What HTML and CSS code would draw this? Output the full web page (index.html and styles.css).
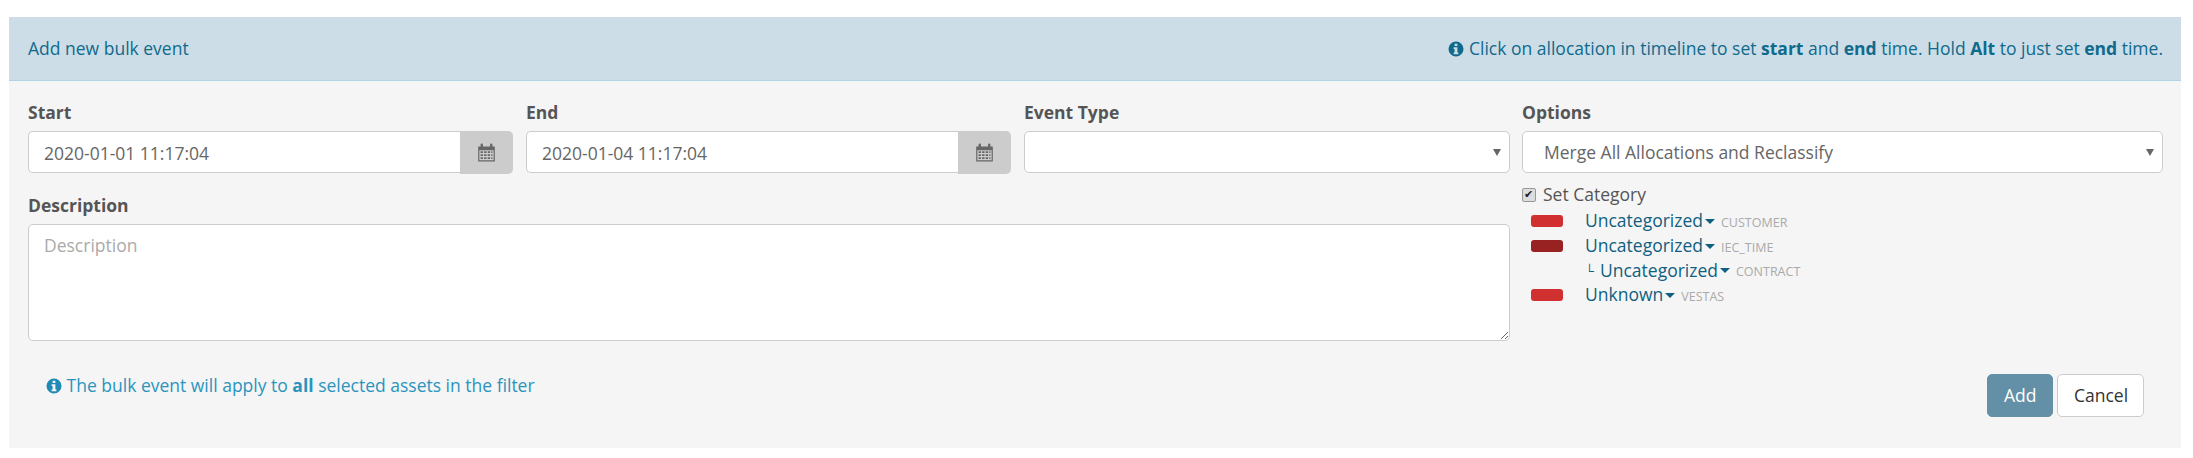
FILE: index.html
```html
<!DOCTYPE html>
<html lang="en">
<head>
<meta charset="utf-8">
<title>Add new bulk event</title>
<link rel="stylesheet" href="styles.css">
</head>
<body>
<section class="panel">
  <header class="panel-head">
    <span class="panel-title">Add new bulk event</span>
    <span class="panel-hint">
      <svg class="info" viewBox="0 0 16 16"><path fill-rule="evenodd" d="M8 .5a7.5 7.5 0 1 0 0 15 7.5 7.5 0 0 0 0-15zM6.6 2.7h2.8v2.2H6.6zM5.6 6.2h3.8v5.3h1v1.8H5.6v-1.8h1V8H5.6z"/></svg>
      Click on allocation in timeline to set <b>start</b> and <b>end</b> time. Hold <b>Alt</b> to just set <b>end</b> time.
    </span>
  </header>
  <form class="panel-body">
    <div class="fields">
      <div class="left">
        <div class="field">
          <label class="lbl">Start</label>
          <div class="group">
            <input class="ctl date" type="text" value="2020-01-01 11:17:04">
            <span class="addon"><svg class="cal" viewBox="0 0 16 16"><path d="M1 3h2V1.6C3 .8 3.5.5 4 .5s1 .3 1 1.1V3h6V1.6c0-.8.5-1.1 1-1.1s1 .3 1 1.1V3h2v12.5H1zM2 6v8.5h12V6zM3 7h2v1.5H3zm3 0h2v1.5H6zm3 0h2v1.5H9zm3 0h1v1.5h-1zM3 9.5h2V11H3zm3 0h2V11H6zm3 0h2V11H9zm3 0h1V11h-1zM3 12h2v1.5H3zm3 0h2v1.5H6zm3 0h2v1.5H9zm3 0h1v1.5h-1z"/></svg></span>
          </div>
        </div>
        <div class="field">
          <label class="lbl">End</label>
          <div class="group">
            <input class="ctl date" type="text" value="2020-01-04 11:17:04">
            <span class="addon"><svg class="cal" viewBox="0 0 16 16"><path d="M1 3h2V1.6C3 .8 3.5.5 4 .5s1 .3 1 1.1V3h6V1.6c0-.8.5-1.1 1-1.1s1 .3 1 1.1V3h2v12.5H1zM2 6v8.5h12V6zM3 7h2v1.5H3zm3 0h2v1.5H6zm3 0h2v1.5H9zm3 0h1v1.5h-1zM3 9.5h2V11H3zm3 0h2V11H6zm3 0h2V11H9zm3 0h1V11h-1zM3 12h2v1.5H3zm3 0h2v1.5H6zm3 0h2v1.5H9zm3 0h1v1.5h-1z"/></svg></span>
          </div>
        </div>
        <div class="field">
          <label class="lbl">Event Type</label>
          <div class="sel"><select class="ctl"><option></option></select></div>
        </div>
        <div class="field desc">
          <label class="lbl">Description</label>
          <textarea class="ctl area" placeholder="Description"></textarea>
        </div>
      </div>
      <div class="right">
        <label class="lbl">Options</label>
        <div class="sel"><select class="ctl"><option>Merge All Allocations and Reclassify</option></select></div>
        <label class="setcat"><input type="checkbox" class="chk" checked> Set Category</label>
        <ul class="cats">
          <li class="cat"><span class="swatch red"></span><a class="catlink">Uncategorized<i class="caret"></i></a><small class="tag">CUSTOMER</small></li>
          <li class="cat"><span class="swatch dark"></span><a class="catlink">Uncategorized<i class="caret"></i></a><small class="tag">IEC_TIME</small></li>
          <li class="cat"><span class="swatch none"></span><span class="elbow">└</span><a class="catlink">Uncategorized<i class="caret"></i></a><small class="tag">CONTRACT</small></li>
          <li class="cat"><span class="swatch red"></span><a class="catlink">Unknown<i class="caret"></i></a><small class="tag">VESTAS</small></li>
        </ul>
      </div>
    </div>
    <div class="foot">
      <p class="note">
        <svg class="info" viewBox="0 0 16 16"><path fill-rule="evenodd" d="M8 .5a7.5 7.5 0 1 0 0 15 7.5 7.5 0 0 0 0-15zM6.6 2.7h2.8v2.2H6.6zM5.6 6.2h3.8v5.3h1v1.8H5.6v-1.8h1V8H5.6z"/></svg>
        The bulk event will apply to <b>all</b> selected assets in the filter
      </p>
      <div class="actions">
        <button type="button" class="btn add">Add</button>
        <button type="button" class="btn cancel">Cancel</button>
      </div>
    </div>
  </form>
</section>
</body>
</html>
```
FILE: styles.css
```css
* { box-sizing: border-box; }
html, body { background: #fff; }
body {
  margin: 0;
  padding: 17px 12px 10px 9px;
  font-family: "Open Sans", sans-serif;
  font-size: 17.5px;
  line-height: 1.25;
  color: #555;
}
.panel { background: #f5f5f5; height: 431px; }
.panel-head {
  height: 64px;
  padding: 0 18px 0 19px;
  display: flex;
  align-items: center;
  justify-content: space-between;
  background: #cddde8;
  border-bottom: 1px solid #add5e3;
  color: #0f6a8c;
}
.panel-head .info { fill: #0f6a8c; }
.info { width: 16px; height: 16px; vertical-align: -2px; }
.panel-body { padding: 21px 18px 0 19px; }
.fields { display: flex; gap: 12px; }
.left {
  width: 1482px;
  display: grid;
  grid-template-columns: 485px 485px 486px;
  column-gap: 13px;
  row-gap: 21px;
  align-content: start;
}
.desc { grid-column: 1 / -1; }
.right { width: 641px; }
.lbl { display: block; font-weight: 700; margin-bottom: 7px; height: 22px; }
.ctl {
  display: block;
  width: 100%;
  height: 42px;
  padding: 2px 15px 0;
  font: inherit;
  color: #666;
  background: #fff;
  border: 1px solid #ccc;
  border-radius: 5px;
  outline: none;
}
.group { display: flex; }
.date { border-radius: 5px 0 0 5px; border-right: 0; flex: 1; min-width: 0; }
.addon {
  width: 53px;
  height: 43px;
  display: flex;
  align-items: center;
  justify-content: center;
  background: #ccc;
  border-radius: 0 5px 5px 0;
}
.cal { width: 19px; height: 19px; fill: #666; }
.sel { position: relative; }
.sel select { appearance: none; -webkit-appearance: none; padding-left: 21px; }
.sel::after {
  content: "";
  position: absolute;
  right: 9px;
  top: 18px;
  border-style: solid;
  border-width: 7px 4px 0;
  border-color: #666 transparent transparent;
}
.area { height: 117px; padding: 10px 15px; resize: vertical; }
.area::placeholder { color: #aaa; }
.setcat { display: flex; align-items: center; gap: 7px; margin: 11px 0 0; height: 22px; }
.chk {
  appearance: none;
  -webkit-appearance: none;
  width: 14px;
  height: 14px;
  margin: 0;
  background: #ddd;
  border: 1px solid #999;
  border-radius: 2px;
  position: relative;
}
.chk::after {
  content: "✔";
  position: absolute;
  left: 1px;
  top: -1px;
  font: 11px/13px "DejaVu Sans", sans-serif;
  color: #222;
}
.cats { list-style: none; margin: 3px 0 0; padding: 0; }
.cat { display: flex; align-items: center; height: 24.7px; }
.swatch { width: 32px; height: 12px; margin: 0 22px 0 9px; border-radius: 3px; flex: none; }
.red { background: #d13030; }
.dark { background: #982222; }
.none { background: none; }
.elbow { font-size: 12.5px; color: #0f5f80; width: 15px; }
.catlink { color: #0f5f80; display: inline-flex; align-items: center; }
.caret {
  margin-left: 2px;
  border-style: solid;
  border-width: 5px 5px 0;
  border-color: #0f5f80 transparent transparent;
}
.tag { font-size: 12.5px; color: #aaa; margin-left: 6px; padding-top: 3px; }
.foot { display: flex; justify-content: space-between; align-items: flex-start; margin-top: 33px; }
.note { margin: 1px 0 0 18px; color: #2b94bd; }
.note .info { fill: #1f8ab5; }
.actions { display: flex; gap: 4px; margin-right: 19px; }
.btn {
  height: 43px;
  font: inherit;
  border-radius: 5px;
  border: 1px solid #ccc;
  padding: 0 16px;
}
.add { background: #6390a6; border-color: #6390a6; color: #fff; width: 66px; }
.cancel { background: #fff; color: #333; width: 87px; }
```
